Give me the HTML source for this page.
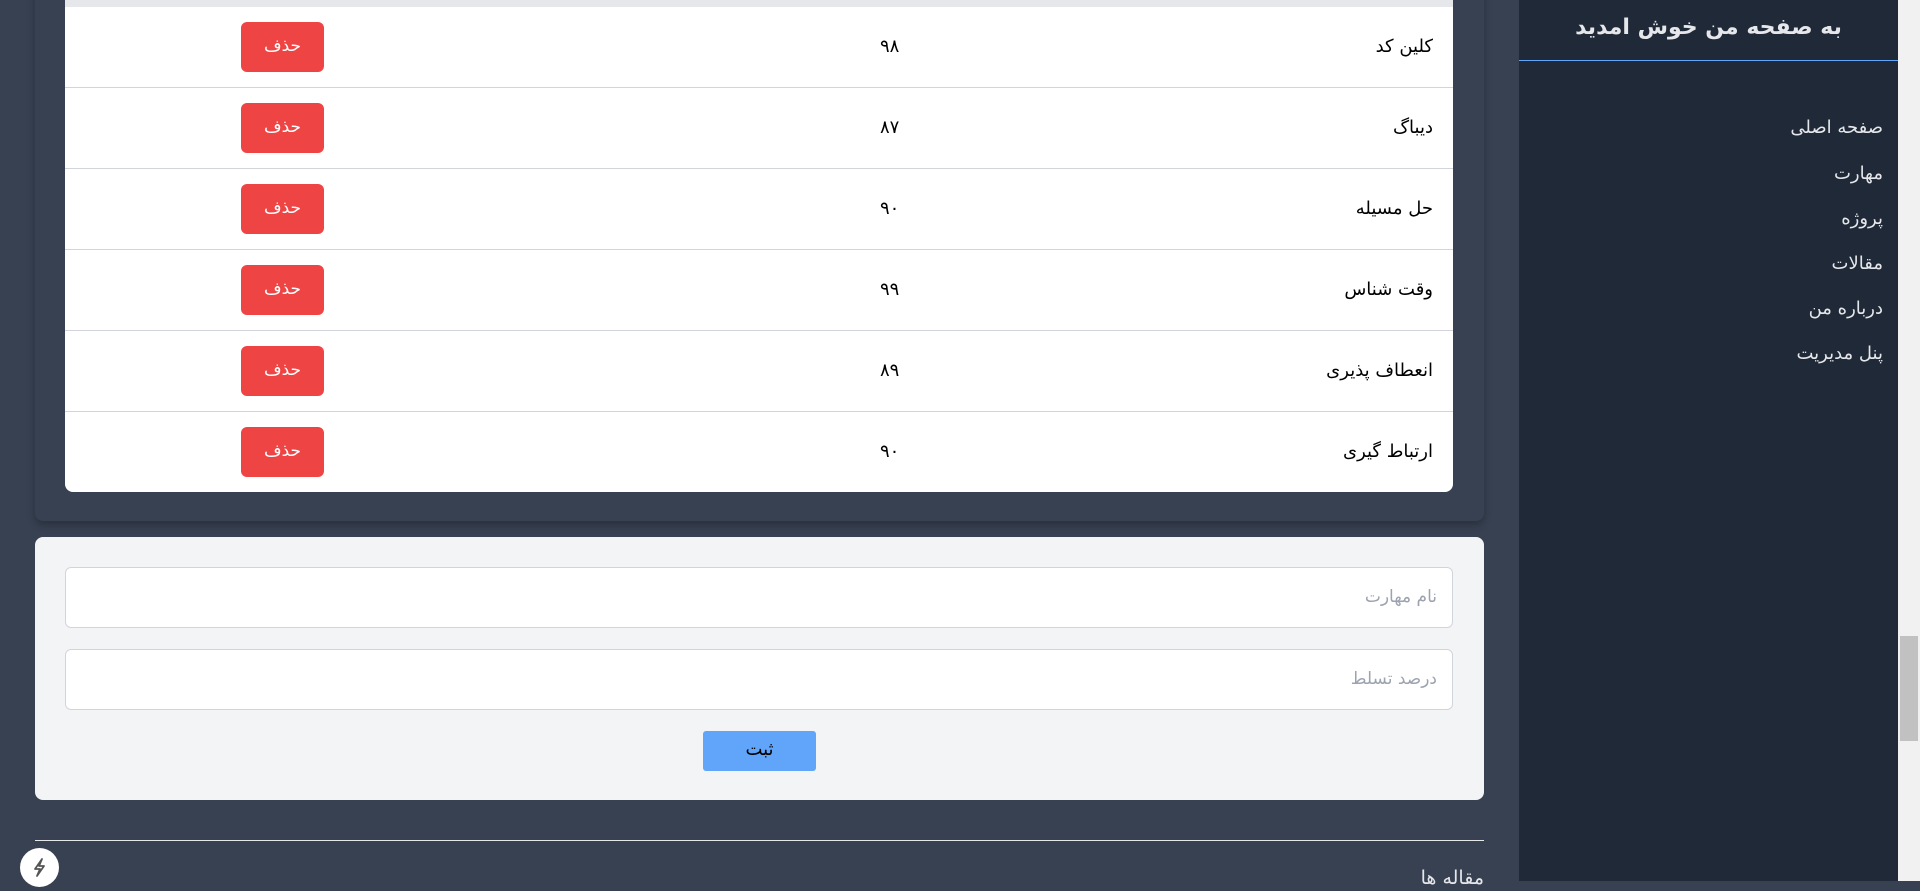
<!DOCTYPE html>
<html><head><meta charset="utf-8"><style>
*{box-sizing:border-box;margin:0;padding:0}
body{width:1920px;height:881px;overflow:hidden;background:#374151;font-family:"DejaVu Sans","Liberation Sans",sans-serif;position:relative}
.abs{position:absolute}
.side{left:1519px;top:0;width:379px;height:881px;background:#1f2937}
.title{left:0;width:379px;top:15px;text-align:center;color:#e5e7eb;font-weight:bold;font-size:22px}
.sline{left:0;top:60px;width:379px;height:1px;background:#60a5fa}
.nav{right:15px;color:#e5e7eb;font-size:18px;direction:rtl}
.scroll{left:1898px;top:0;width:22px;height:881px;background:#f1f1f1}
.thumb{left:1900px;top:636px;width:18px;height:105px;background:#c1c1c1}
.outer{left:35px;top:-20px;width:1449px;height:541px;border-radius:8px;background:#374151;box-shadow:0 4px 8px rgba(0,0,0,.25)}
.table{left:65px;top:-10px;width:1388px;height:502px;background:#fff;border-radius:8px;overflow:hidden}
.hdr{left:0;top:0;width:1388px;height:17px;background:#e5e7eb}
.row{left:0;width:1388px;height:81px;border-bottom:1px solid #d1d5db}
.name{right:20px;top:29px;font-size:18px;color:#000;direction:rtl}
.num{left:815px;top:29px;font-size:18px;color:#000}
.del{left:176px;top:15px;width:83px;height:50px;background:#ef4444;border-radius:6px;color:#fff;font-size:17px;text-align:center;line-height:48px}
.form{left:35px;top:537px;width:1449px;height:263px;background:#f3f4f6;border-radius:8px}
.inp{left:30px;width:1388px;height:61px;background:#fff;border:1px solid #d1d5db;border-radius:6px;color:#9ca3af;font-size:17px;direction:rtl;padding:19px 15px 0 0}
.btn{left:668px;top:194px;width:113px;height:40px;background:#60a5fa;border-radius:3px;text-align:center;line-height:38px;font-size:18px;color:#000}
.hr{left:35px;top:840px;width:1449px;height:1px;background:#e5e7eb}
</style></head><body>
<div class="abs outer"></div>
<div class="abs table">
<div class="abs hdr"></div>
<div class="abs row" style="top:17px"><div class="abs name">کلین کد</div><div class="abs num">۹۸</div><div class="abs del">حذف</div></div>
<div class="abs row" style="top:98px"><div class="abs name">دیباگ</div><div class="abs num">۸۷</div><div class="abs del">حذف</div></div>
<div class="abs row" style="top:179px"><div class="abs name">حل مسیله</div><div class="abs num">۹۰</div><div class="abs del">حذف</div></div>
<div class="abs row" style="top:260px"><div class="abs name">وقت شناس</div><div class="abs num">۹۹</div><div class="abs del">حذف</div></div>
<div class="abs row" style="top:341px"><div class="abs name">انعطاف پذیری</div><div class="abs num">۸۹</div><div class="abs del">حذف</div></div>
<div class="abs row" style="top:422px;border:none"><div class="abs name">ارتباط گیری</div><div class="abs num">۹۰</div><div class="abs del">حذف</div></div>
</div>
<div class="abs form">
<div class="abs inp" style="top:30px">نام مهارت</div>
<div class="abs inp" style="top:112px">درصد تسلط</div>
<div class="abs btn">ثبت</div>
</div>
<div class="abs hr"></div>
<div class="abs" style="right:436px;top:867px;color:#e5e7eb;font-size:19px;direction:rtl">مقاله ها</div>
<div class="abs" style="left:20px;top:848px;width:39px;height:39px;border-radius:50%;background:#fff">
<svg width="39" height="39" viewBox="0 0 39 39"><path d="M22 11 L15 21 L20 21 L17 28 L24 18 L19 18 Z" fill="none" stroke="#555" stroke-width="1.8" stroke-linejoin="round"/></svg></div>
<div class="abs side">
<div class="abs title">به صفحه من خوش امدید</div>
<div class="abs sline"></div>
<div class="abs nav" style="top:117px">صفحه اصلی</div>
<div class="abs nav" style="top:163px">مهارت</div>
<div class="abs nav" style="top:208px">پروژه</div>
<div class="abs nav" style="top:253px">مقالات</div>
<div class="abs nav" style="top:298px">درباره من</div>
<div class="abs nav" style="top:343px">پنل مدیریت</div>
</div>
<div class="abs scroll"></div><div class="abs thumb"></div>
</body></html>
